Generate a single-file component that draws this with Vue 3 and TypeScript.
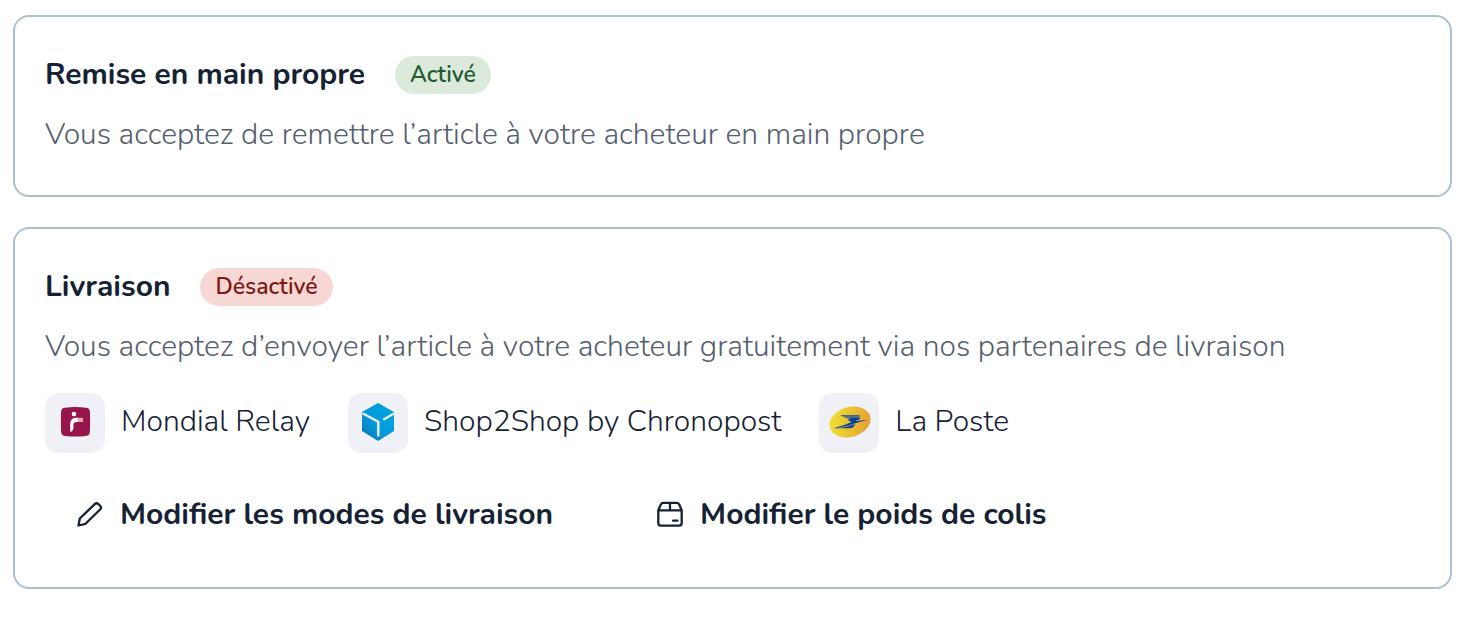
<script setup lang="ts">
interface Partner {
  id: 'mondial' | 'chronopost' | 'laposte'
  name: string
}

const partners: Partner[] = [
  { id: 'mondial', name: 'Mondial Relay' },
  { id: 'chronopost', name: 'Shop2Shop by Chronopost' },
  { id: 'laposte', name: 'La Poste' },
]
</script>

<template>
  <main class="page">
    <section class="card">
      <header class="card-header">
        <h2 class="title">Remise en main propre</h2>
        <span class="badge badge-on">Activé</span>
      </header>
      <p class="description">Vous acceptez de remettre l’article à votre acheteur en main propre</p>
    </section>

    <section class="card">
      <header class="card-header">
        <h2 class="title">Livraison</h2>
        <span class="badge badge-off">Désactivé</span>
      </header>
      <p class="description">Vous acceptez d’envoyer l’article à votre acheteur gratuitement via nos partenaires de livraison</p>

      <ul class="partners">
        <li v-for="partner in partners" :key="partner.id" class="partner">
          <span class="logo">
            <svg v-if="partner.id === 'mondial'" viewBox="0 0 60 60" aria-hidden="true">
              <path d="M20 14.800Q30.500 13.400 41 14.800Q44.600 15.100 44.900 18.600Q45.400 29 44.900 39.100Q44.600 42.600 41 42.900Q30.500 44.300 20 42.900Q16.400 42.600 16.100 39.100Q15.600 29 16.100 18.600Q16.400 15.100 20 14.800Z" fill="#96154a" />
              <circle cx="29" cy="21" r="2.300" fill="#fff" />
              <path d="M33.500 24.800H30.500Q25.300 25.300 25.200 31V39Q28 38.300 28.400 35.500V32Q28.600 29 31.500 29H33.500Z" fill="#fff" />
              <path d="M33.500 24.800H38V29H33.500Z" fill="#eba4ae" />
            </svg>
            <svg v-else-if="partner.id === 'chronopost'" viewBox="0 0 60 60" aria-hidden="true">
              <defs>
                <linearGradient id="cube" x1="0" y1="1" x2="0.7" y2="0.300">
                  <stop offset="0" stop-color="#0870b5" />
                  <stop offset="0.600" stop-color="#0499da" />
                  <stop offset="1" stop-color="#00a0df" />
                </linearGradient>
              </defs>
              <path d="M30 10L46 19V38L30 48L14 38V19Z" fill="url(#cube)" />
              <path d="M14.500 20.200L30.300 28.800V43.500M46 20.500L35.300 26.700" fill="none" stroke="#f0f1f6" stroke-width="2.400" stroke-linejoin="round" />
            </svg>
            <svg v-else viewBox="0 0 60 60" aria-hidden="true">
              <defs>
                <linearGradient id="poste" x1="0" y1="0" x2="1" y2="0.300">
                  <stop offset="0" stop-color="#f3e442" />
                  <stop offset="0.450" stop-color="#ebcc2f" />
                  <stop offset="1" stop-color="#e6a536" />
                </linearGradient>
              </defs>
              <ellipse cx="31" cy="29" rx="21" ry="15" transform="rotate(-16 31 29)" fill="url(#poste)" />
              <path d="M21.500 22.300H40.500L41 25.800L39 27H28.500L31.500 25.500Q25 25.300 21.500 22.300Z" fill="#0b419d" />
              <path d="M28.500 27H37.500V28L49 26.800L37 30L34 34.500L31 35.300H14.500L27.500 31.200L32.500 28.700Z" fill="#0b419d" />
              <path d="M23 23.800L41 24M20 34.700Q31 33.200 37 30.400" fill="none" stroke="#ecd13b" stroke-width="0.600" />
            </svg>
          </span>
          <span class="partner-name">{{ partner.name }}</span>
        </li>
      </ul>

      <div class="actions">
        <button type="button" class="action">
          <svg class="action-icon" viewBox="0 0 28 28" aria-hidden="true">
            <path d="M2.500 25.500L3.800 18.500L18.800 4.100Q20.600 2.300 22.600 4.300L24.100 5.800Q26 7.700 24.100 9.500L9.500 23.800Z" />
          </svg>
          <span>Modifier les modes de livraison</span>
        </button>
        <button type="button" class="action">
          <svg class="action-icon" viewBox="0 0 28 28" aria-hidden="true">
            <path d="M2.300 10.300L4.800 4.500Q5.600 2.900 7.400 2.900H20.600Q22.400 2.900 23.200 4.500L25.700 10.300V23Q25.700 25.700 23 25.700H5Q2.300 25.700 2.300 23ZM2.300 10.300H25.700M14 3V10M17 20.700H21.500" />
          </svg>
          <span>Modifier le poids de colis</span>
        </button>
      </div>
    </section>
  </main>
</template>

<style>
body {
  margin: 0;
  background: #fff;
}
</style>

<style scoped>
.page {
  display: flex;
  flex-direction: column;
  gap: 30px;
  padding: 15px 13px 32px;
  color: #152233;
  font-family: Nunito, "Open Sans", "Noto Sans", sans-serif;
  font-size: 30px;
  font-weight: 300;
}

.card {
  padding: 39px 30px 38px;
  border: 2px solid #adc0d1;
  border-radius: 16px;
}

.card-header {
  display: flex;
  align-items: center;
  gap: 30px;
}

.title {
  margin: 0;
  font-size: 30px;
  font-weight: 700;
  line-height: 38px;
}

.badge {
  padding: 0 15px;
  border-radius: 19px;
  font-size: 23px;
  font-weight: 600;
  line-height: 38px;
}

.badge-on {
  background: #dceadb;
  color: #245a32;
}

.badge-off {
  background: #f7d7d4;
  color: #7d1a15;
}

.description {
  margin: 18px 0 0;
  color: #56606e;
  line-height: 45px;
}

.partners {
  display: flex;
  flex-wrap: wrap;
  gap: 16px 38px;
  margin: 24px 0 0;
  padding: 0;
  list-style: none;
}

.partner {
  display: flex;
  align-items: flex-start;
  gap: 16px;
}

.partner-name {
  line-height: 58px;
}

.logo {
  width: 60px;
  height: 60px;
  border-radius: 14px;
  background: #f0f1f6;
}

.logo svg {
  display: block;
}

.actions {
  display: flex;
  flex-wrap: wrap;
  gap: 0 41px;
  margin: 28px 0 2px;
}

.action {
  display: flex;
  align-items: center;
  gap: 16px;
  height: 66px;
  padding: 0 31px;
  border: 0;
  background: none;
  color: inherit;
  font: inherit;
  font-weight: 700;
  cursor: pointer;
}

.action-icon {
  width: 28px;
  height: 28px;
  fill: none;
  stroke: currentColor;
  stroke-width: 2.300;
  stroke-linecap: round;
  stroke-linejoin: round;
}
</style>
